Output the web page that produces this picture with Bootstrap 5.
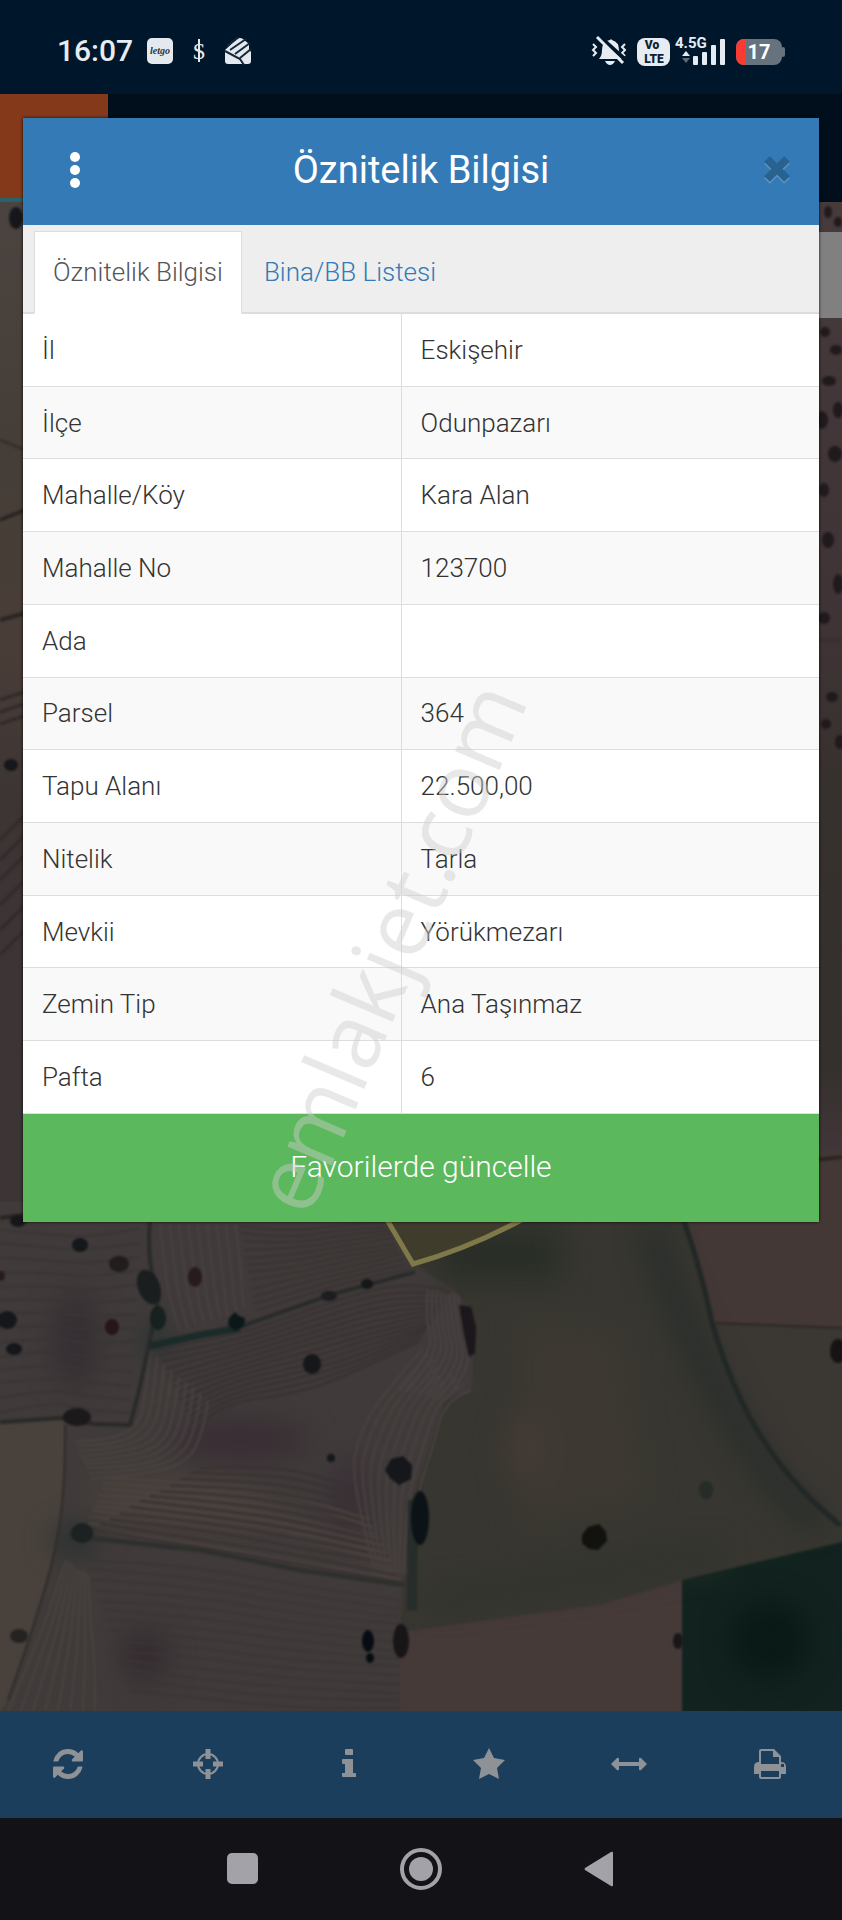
<!DOCTYPE html>
<html lang="tr">
<head>
<meta charset="utf-8">
<meta name="viewport" content="width=device-width, initial-scale=1">
<title>Öznitelik Bilgisi</title>
<link href="https://cdn.jsdelivr.net/npm/bootstrap@5.3.0/dist/css/bootstrap.min.css" rel="stylesheet">
<style>
  body { font-family: Roboto, "Noto Sans", sans-serif; font-weight: 300; background: #3f3937; }
  button { font-family: inherit; }
  .status-bar { height: 94px; padding: 8px 57px 0; background: #00172b; color: #e6ecf2; }
  .clock { font-size: 30px; line-height: 40px; font-weight: 500; margin-right: 14px; }
  .brand-strip { height: 108px; background: #000f1b; }
  .brand-tile { width: 108px; background: #84391b; border-bottom: 4px solid #28626c; }
  .map-area { min-height: 0; background: #403a38; }
  .map-area svg { position: absolute; inset: 0; }
  .side-panel { position: absolute; top: 30px; right: 0; width: 60px; height: 86px; background: #808080; }
  .tool-bar { height: 107px; background: #1b3e5c; color: #8e9296; }
  .tool-bar .btn, .system-nav .btn { color: inherit; border: 0; border-radius: 0; }
  .tool-bar .btn { flex: 1 1 0; padding: 0 4px 2px 0; }
  .system-nav { height: 102px; background: #131217; color: #a3a2a8; }
  .system-nav .btn { width: 178px; }
  .info-dialog { position: absolute; top: 24px; left: 23px; right: 23px; box-shadow: 0 0 3px rgba(0,0,0,.8); background: #fff; }
  .dialog-head { height: 107px; padding-bottom: 3px; background: #337ab7; color: #fff; }
  .dialog-title { font-size: 38px; line-height: 48px; font-weight: 400; }
  .dialog-head .btn { width: 104px; height: 56px; padding: 0; color: #fff; border: 0; }
  .dialog-head .btn-dismiss { padding-right: 28px; text-align: right; }
  .tab-strip { padding: 6px 11px 0; background: #eee; border-bottom: 2px solid #ddd; }
  .tab-strip .nav-link { height: 83px; margin: 0 3px -2px 0; padding: 20px 18px 0; border-radius: 0; font-size: 26px; line-height: 40px; color: #337ab7; }
  .tab-strip .nav-link.active { color: #555; border-color: #ddd #ddd #fff; }
  .attr-table { height: 800px; font-size: 26px; line-height: 40px; table-layout: fixed; }
  .attr-table th, .attr-table td { padding: 15px 18px 15px 19px; border-bottom: 1px solid #ddd; font-weight: 300; box-shadow: none; color: #333; vertical-align: middle; }
  .attr-table th { width: 47.5%; border-right: 1px solid #ddd; }
  .attr-table tr:nth-child(even) > * { background: #f9f9f9; }
  .btn-update { height: 108px; padding: 4px 12px 8px; background: #5cb85c; color: #fff; font-size: 30px; font-weight: 300; border: 0; border-radius: 0; }
  .btn-update:hover { background: #4cae4c; color: #fff; }
  .stamp { position: absolute; left: 0; top: 0; pointer-events: none; overflow: visible; }
  .stamp text { font-family: "Open Sans", "Noto Sans", sans-serif; font-size: 90px; font-weight: 400; fill: #cdcdcd; fill-opacity: .46; }
</style>
</head>
<body>
<div class="d-flex flex-column min-vh-100">

  <header class="status-bar d-flex align-items-center justify-content-between">
    <div class="d-flex align-items-center">
      <span class="clock">16:07</span>
      <svg width="108" height="28" viewBox="0 0 108 28" role="img" aria-label="Bildirimler">
        <rect x="0" y="1" width="26" height="26" rx="5" fill="#e3e9ee"/>
        <text x="13" y="17" text-anchor="middle" font-family="Liberation Serif, serif" font-style="italic" font-weight="700" font-size="10" fill="#27343f">letgo</text>
        <text x="52" y="22" text-anchor="middle" font-family="Liberation Serif, serif" font-size="24" fill="#e3e9ee">$</text>
        <path d="M52 2v23" stroke="#e3e9ee" stroke-width="2"/>
        <path d="M78 13 90 2q3-2 6 0l6 5v5l2 3v9q0 3-3 3H81q-3 0-3-3z" fill="#e3e9ee"/>
        <path d="M80 9 92 0M83 13 99 2M88 17 103 6M78 14 93 22l4 6M93 21l11-9" stroke="#142838" stroke-width="2" fill="none"/>
      </svg>
    </div>
    <svg width="194" height="38" viewBox="0 -4 194 38" role="img" aria-label="Titreşim, VoLTE, 4.5G, pil yüzde 17">
      <g fill="#e6ecf2">
        <path d="M8 23q3-3 3-9 0-9 8-10l1-1 1 1q7 2 7 10 0 6 4 9z"/>
        <path d="M14 25h10q-2 4-5 4t-5-4z"/>
        <path d="M2 8l3 3-3 3 3 3-3 3M34 8l-3 3 3 3-3 3 3 3" fill="none" stroke="#e6ecf2" stroke-width="2"/>
        <path d="M8 0 37 26" stroke="#00172b" stroke-width="4"/>
        <path d="M6 1 32 27" stroke="#e6ecf2" stroke-width="3"/>
        <rect x="46" y="2" width="33" height="28" rx="8"/>
        <text x="84" y="12" font-family="Roboto, sans-serif" font-size="15" font-weight="700">4.5G</text>
        <path d="M91 20l4-5 4 5z"/><path d="M91 22l4 5 4-5z" opacity=".4"/>
        <rect x="102" y="20" width="5" height="9" rx="1"/><rect x="111" y="16" width="5" height="13" rx="1"/><rect x="120" y="9" width="5" height="20" rx="1"/><rect x="129" y="3" width="5" height="26" rx="1"/>
      </g>
      <g font-family="Roboto, sans-serif" font-weight="900" fill="#0b2134" text-anchor="middle">
        <text x="61" y="13" font-size="12">Vo</text><text x="63" y="27" font-size="12">LTE</text>
      </g>
      <rect x="145" y="3" width="46" height="26" rx="8" fill="#66727d"/>
      <rect x="190" y="11" width="4" height="10" rx="2" fill="#66727d"/>
      <path d="M154 3h1v26h-1q-9 0-9-9v-8q0-9 9-9z" fill="#fa3b33"/>
      <text x="168" y="23" text-anchor="middle" font-family="Roboto, sans-serif" font-size="20" font-weight="700" fill="#fff">17</text>
    </svg>
  </header>

  <main class="position-relative flex-grow-1 d-flex flex-column">
    <div class="brand-strip d-flex"><div class="brand-tile"></div></div>

    <section class="map-area position-relative flex-grow-1 overflow-hidden" aria-label="Uydu haritası">
      <svg width="100%" height="100%" viewBox="0 202 842 1509" preserveAspectRatio="xMidYMax slice" aria-hidden="true">
        <defs>
          <filter id="soft" x="-10%" y="-10%" width="120%" height="120%" color-interpolation-filters="sRGB"><feGaussianBlur stdDeviation="1"/></filter>
          <filter id="haze" x="-50%" y="-50%" width="200%" height="200%" color-interpolation-filters="sRGB"><feGaussianBlur stdDeviation="14"/></filter>
          <linearGradient id="leftEdge" x1="0" y1="0" x2="0" y2="1">
            <stop offset="0" stop-color="#4a433f"/><stop offset=".25" stop-color="#453e38"/><stop offset=".45" stop-color="#493d37"/><stop offset=".6" stop-color="#3c3534"/><stop offset="1" stop-color="#3c3435"/>
          </linearGradient>
          <linearGradient id="rightEdge" x1="0" y1="0" x2="0" y2="1">
            <stop offset="0" stop-color="#463a3b"/><stop offset=".45" stop-color="#3e3335"/><stop offset=".6" stop-color="#37312e"/><stop offset=".9" stop-color="#34302d"/><stop offset="1" stop-color="#43363a"/>
          </linearGradient>
        </defs>
        <rect y="202" width="842" height="1509" fill="#403b3a"/>
        <rect y="202" width="60" height="1000" fill="url(#leftEdge)"/>
        <rect x="780" y="202" width="62" height="960" fill="url(#rightEdge)"/>
        <g filter="url(#soft)">
          <path d="M-5 1425 65 1418Q66 1500 55 1550T8 1700L-5 1720z" fill="#49423c"/>
          <path d="M388 1210 684 1210Q700 1265 712 1323 735 1400 768 1447 795 1488 850 1530V1545L682 1580 600 1605 400 1632 412 1500 445 1400 472 1392 474 1320 455 1290 415 1264z" fill="#373630"/>
          <path d="M684 1210Q700 1265 712 1323L850 1328V1150H780z" fill="#443836"/>
          <path d="M712 1323Q735 1400 768 1447 795 1488 850 1530V1328z" fill="#3b3733"/>
          <path d="M400 1632 600 1605 682 1580V1720H400z" fill="#463a39"/>
          <path d="M682 1580 850 1540V1720H682z" fill="#12231f"/>
        </g>
        <g filter="url(#haze)">
          <path d="M650 1230Q690 1350 740 1430T820 1520" fill="none" stroke="#262c2a" stroke-width="20"/>
          <path d="M440 1280H560V1230H440z" fill="#292e27"/>
          <path d="M520 1320 620 1330 650 1500 520 1530z" fill="#3d3932"/>
          <ellipse cx="525" cy="1450" rx="22" ry="40" fill="#433a35"/>
          <path d="M430 1600 600 1575 720 1555" fill="none" stroke="#2f332e" stroke-width="16"/>
          <ellipse cx="240" cy="1440" rx="70" ry="20" fill="#382d34"/>
          <ellipse cx="75" cy="1340" rx="22" ry="50" fill="#352e33"/>
          <ellipse cx="145" cy="1655" rx="22" ry="25" fill="#332930"/>
          <ellipse cx="350" cy="1500" rx="20" ry="45" fill="#3a3037"/>
          <ellipse cx="180" cy="1500" rx="90" ry="18" fill="#4b433e"/>
          <ellipse cx="75" cy="1540" rx="24" ry="14" fill="#26302e"/>
          <ellipse cx="155" cy="1338" rx="12" ry="16" fill="#1f302f"/>
          <ellipse cx="770" cy="1640" rx="40" ry="40" fill="#091a17"/>
        </g>
        <g id="furrows" fill="none" stroke-width="2" filter="url(#soft)"></g>
        <g fill="none" filter="url(#soft)">
          <path d="M150 1222Q146 1260 158 1300L150 1340 138 1395 130 1425 95 1424 60 1418 0 1422" stroke="#292a29" stroke-width="4"/>
          <path d="M150 1346 200 1335 245 1325 330 1295 415 1272" stroke="#282b2a" stroke-width="4"/>
          <path d="M150 1346 200 1335 240 1328" stroke="#1c2a2a" stroke-width="7"/>
          <path d="M65 1425Q66 1500 55 1550T8 1700" stroke="#2f2c2b" stroke-width="2"/>
          <path d="M70 1536 200 1550 300 1570 405 1585" stroke="#2e302e" stroke-width="5"/>
          <path d="M684 1222Q700 1265 712 1323 735 1400 768 1447 795 1488 840 1525" stroke="#212826" stroke-width="5"/>
          <path d="M712 1323 842 1328" stroke="#2c2828" stroke-width="2"/>
          <path d="M0 1218 40 1213M0 520 30 508M0 620 30 612M815 1160 842 1157" stroke="#2a2523" stroke-width="4"/>
          <path d="M0 440 30 452M810 640H842M815 950 842 946" stroke="#37302d" stroke-width="3"/>
          <path d="M0 700 30 690M0 712 30 702M0 724 30 714M0 840 30 810M0 860 30 830M0 880 30 850M0 905 30 875M0 930 30 900M0 955 30 925" stroke="#302a2a" stroke-width="3"/>
          <path d="M413 1500 412 1610" stroke="#262d2a" stroke-width="10"/>
        </g>
        <path d="M386 1218 413 1264Q470 1248 525 1218z" fill="#403c2c" stroke="#7f7848" stroke-width="5"/>
        <g fill="#15171a" filter="url(#soft)">
          <ellipse cx="18" cy="1221" rx="8" ry="6"/><ellipse cx="80" cy="1245" rx="8" ry="7"/><ellipse cx="119" cy="1264" rx="10" ry="8" fill="#211c1e"/>
          <ellipse cx="149" cy="1287" rx="11" ry="18" fill="#1a1e1f" transform="rotate(-20 149 1287)"/><ellipse cx="158" cy="1318" rx="8" ry="12" fill="#17211f"/>
          <ellipse cx="195" cy="1277" rx="7" ry="10" fill="#281b1e"/><ellipse cx="112" cy="1327" rx="7" ry="8" fill="#261519"/>
          <ellipse cx="7" cy="1320" rx="10" ry="9"/><ellipse cx="14" cy="1349" rx="8" ry="6"/><ellipse cx="1" cy="1276" rx="4" ry="5" fill="#281b1e"/>
          <path d="M235 1312l4 4 6 2-1 8-9 5-7-6 1-7z" fill="#0c1719"/><ellipse cx="329" cy="1296" rx="8" ry="5" fill="#1c1d20"/><ellipse cx="367" cy="1284" rx="6" ry="5"/>
          <ellipse cx="312" cy="1364" rx="9" ry="10"/><ellipse cx="77" cy="1417" rx="14" ry="9" fill="#1c191b"/><ellipse cx="331" cy="1458" rx="4" ry="4"/>
          <path d="M385 1470l6-11 12-3 9 9-1 14-12 6-9-7z"/><ellipse cx="420" cy="1518" rx="9" ry="27" fill="#0b1316"/>
          <ellipse cx="82" cy="1533" rx="11" ry="10" fill="#1b2221"/><ellipse cx="19" cy="1636" rx="9" ry="7" fill="#252222"/>
          <ellipse cx="368" cy="1641" rx="6" ry="11" fill="#080c12"/><ellipse cx="370" cy="1658" rx="4" ry="5" fill="#080c12"/><ellipse cx="401" cy="1641" rx="8" ry="17" fill="#181517"/>
          <path d="M459 1305l12 2 5 20-1 26-6 4-5-22z" fill="#1b171b"/>
          <path d="M582 1535l6-8 11-3 7 8 1 9-9 9-9-1-7-6z" fill="#12120f"/><ellipse cx="838" cy="1351" rx="8" ry="12" fill="#171315"/>
          <ellipse cx="678" cy="1641" rx="5" ry="8" fill="#17171a"/><ellipse cx="706" cy="1490" rx="7" ry="9" fill="#262c27"/>
          <ellipse cx="11" cy="765" rx="7" ry="6"/><ellipse cx="16" cy="218" rx="7" ry="11"/>
          <g fill="#211a1c">
            <ellipse cx="825" cy="332" rx="5" ry="5"/><ellipse cx="836" cy="350" rx="6" ry="5"/><ellipse cx="829" cy="381" rx="7" ry="5"/><ellipse cx="822" cy="420" rx="6" ry="9"/><ellipse cx="838" cy="410" rx="5" ry="8"/><ellipse cx="835" cy="454" rx="7" ry="8"/><ellipse cx="824" cy="490" rx="5" ry="7"/><ellipse cx="828" cy="540" rx="6" ry="8"/><ellipse cx="838" cy="584" rx="5" ry="10"/><ellipse cx="824" cy="618" rx="6" ry="6"/><ellipse cx="832" cy="697" rx="6" ry="5"/><ellipse cx="826" cy="724" rx="5" ry="5"/><ellipse cx="840" cy="742" rx="5" ry="7"/><ellipse cx="828" cy="212" rx="4" ry="6"/><ellipse cx="838" cy="222" rx="4" ry="5"/>
          </g>
        </g>
      </svg>
      <div class="side-panel"></div>
    </section>

    <nav class="tool-bar d-flex align-items-stretch" aria-label="Harita araçları">
      <button class="btn" type="button" aria-label="Yenile"><svg width="30" height="30" viewBox="0 0 1536 1536" fill="currentColor"><path d="M1511 928q0 5-1 7-64 268-268 434.500T764 1536q-146 0-282.500-55T238 1324l-129 129q-19 19-45 19t-45-19-19-45V960q0-26 19-45t45-19h448q26 0 45 19t19 45-19 45l-137 137q71 66 161 102t187 36q134 0 250-65t186-179q11-17 53-117 8-23 30-23h192q13 0 22.500 9.500T1511 928zm25-800v448q0 26-19 45t-45 19h-448q-26 0-45-19t-19-45 19-45l138-138Q969 256 768 256q-134 0-250 65T332 500q-11 17-53 117-8 23-30 23H50q-13 0-22.500-9.500T18 608v-7q65-268 270-434.500T768 0q146 0 284 55.500T1297 212l130-129q19-19 45-19t45 19 19 45z"/></svg></button>
      <button class="btn" type="button" aria-label="Konumum"><svg width="30" height="30" viewBox="0 0 30 30" fill="none" stroke="currentColor"><circle cx="15" cy="15" r="10" stroke-width="2"/><path d="M15 0v10M15 20v10M0 15h10M20 15h10" stroke-width="5"/></svg></button>
      <button class="btn" type="button" aria-label="Bilgi"><svg width="30" height="30" viewBox="0 0 30 30" fill="currentColor"><path d="M12 0h6q1 0 1 1v5h-7q-1 0-1-1V1q0-1 1-1zM9 10h10v14h2q1 0 1 1v3H9q-1 0-1-1v-3h3v-9H9q-1 0-1-1v-3q0-1 1-1z"/></svg></button>
      <button class="btn" type="button" aria-label="Favoriler"><svg width="32" height="32" viewBox="0 0 32 32" fill="currentColor"><path d="M16 0l5 10 11 2-8 8 2 11-10-5-10 5 2-11-8-8 11-2z"/></svg></button>
      <button class="btn" type="button" aria-label="Mesafe ölç"><svg width="36" height="30" viewBox="0 0 36 30" fill="currentColor"><path d="M0 15 6 9q2-1 2 1v3h20v-3q0-2 2-1l6 6-6 6q-2 1-2-1v-3H8v3q0 2-2 1z"/></svg></button>
      <button class="btn" type="button" aria-label="Yazdır"><svg width="32" height="30" viewBox="0 0 32 30" fill="currentColor"><path fill-rule="evenodd" d="M5 2q0-2 2-2h13l7 7v6q5 0 5 5v7h-5v3q0 2-2 2H7q-2 0-2-2v-3H0v-7q0-5 5-5zm2 0v13h18V8h-6V2zm0 20v6h18v-6zm20-7v3h3v-3z"/></svg></button>
    </nav>

    <section class="info-dialog" role="dialog" aria-labelledby="dialogTitle">
      <div class="dialog-head d-flex align-items-center justify-content-between">
        <button class="btn" type="button" aria-label="Menü"><svg width="12" height="38" viewBox="0 0 12 38" fill="currentColor"><circle cx="6" cy="6" r="5"/><circle cx="6" cy="19" r="5"/><circle cx="6" cy="32" r="5"/></svg></button>
        <h1 class="dialog-title m-0" id="dialogTitle">Öznitelik Bilgisi</h1>
        <button class="btn btn-dismiss" type="button" aria-label="Kapat"><svg width="28" height="30" viewBox="0 0 28 30" fill="none" stroke-width="8"><path d="M4 6 24 26M24 6 4 26" stroke="#5c95c5"/><path d="M4 4 24 24M24 4 4 24" stroke="#29628f"/></svg></button>
      </div>
      <nav class="nav nav-tabs tab-strip">
        <a class="nav-link active" href="#oznitelik" aria-current="page">Öznitelik Bilgisi</a>
        <a class="nav-link" href="#bina">Bina/BB Listesi</a>
      </nav>
      <table class="table attr-table m-0" id="oznitelik">
        <tbody>
          <tr><th scope="row">İl</th><td>Eskişehir</td></tr>
          <tr><th scope="row">İlçe</th><td>Odunpazarı</td></tr>
          <tr><th scope="row">Mahalle/Köy</th><td>Kara Alan</td></tr>
          <tr><th scope="row">Mahalle No</th><td>123700</td></tr>
          <tr><th scope="row">Ada</th><td></td></tr>
          <tr><th scope="row">Parsel</th><td>364</td></tr>
          <tr><th scope="row">Tapu Alanı</th><td>22.500,00</td></tr>
          <tr><th scope="row">Nitelik</th><td>Tarla</td></tr>
          <tr><th scope="row">Mevkii</th><td>Yörükmezarı</td></tr>
          <tr><th scope="row">Zemin Tip</th><td>Ana Taşınmaz</td></tr>
          <tr><th scope="row">Pafta</th><td>6</td></tr>
        </tbody>
      </table>
      <button class="btn btn-update w-100" type="button">Favorilerde güncelle</button>
      <svg class="stamp" width="100%" height="100%" viewBox="0 0 796 1104" aria-hidden="true"><text transform="translate(286 1101) rotate(-67)">emlakjet.com</text></svg>
    </section>
  </main>

  <nav class="system-nav d-flex justify-content-center align-items-center" aria-label="Sistem gezinmesi">
    <button class="btn p-0" type="button" aria-label="Son uygulamalar"><svg width="32" height="32" viewBox="0 0 32 32" fill="currentColor"><rect width="31" height="31" rx="5"/></svg></button>
    <button class="btn p-0" type="button" aria-label="Ana ekran"><svg width="44" height="44" viewBox="0 0 44 44" fill="currentColor"><circle cx="22" cy="22" r="12"/><circle cx="22" cy="22" r="19" fill="none" stroke="currentColor" stroke-width="4"/></svg></button>
    <button class="btn p-0" type="button" aria-label="Geri"><svg width="32" height="36" viewBox="0 0 32 36" fill="currentColor"><path d="M2 17 28 1q2-1 2 1v32q0 2-2 1L2 19q-1-1 0-2z"/></svg></button>
  </nav>
</div>

<script src="https://cdn.jsdelivr.net/npm/bootstrap@5.3.0/dist/js/bootstrap.bundle.min.js"></script>
<script>
  // Plough lines: each field blends from its first guide line to its last one.
  const fields = [
    { n: 9, c: '#484140', a: [[160,1222],[165,1270],[172,1310],[180,1330]], b: [[235,1222],[240,1260],[242,1290],[244,1310]] },
    { n: 12, c: '#393332', a: [[240,1226],[290,1232],[340,1225],[385,1222]], b: [[255,1312],[300,1296],[350,1282],[408,1268]] },
    { n: 14, c: '#373131', a: [[155,1350],[240,1335],[330,1302],[410,1280],[450,1292]], b: [[195,1430],[215,1405],[300,1392],[350,1375],[420,1340]] },
    { n: 9, c: '#494241', a: [[150,1352],[146,1390],[140,1425],[110,1440],[75,1442]], b: [[208,1400],[205,1425],[190,1460],[150,1475],[90,1478]] },
    { n: 10, c: '#4c433e', a: [[105,1478],[190,1482],[300,1495],[370,1520]], b: [[85,1528],[190,1543],[300,1562],[400,1580]] },
    { n: 12, c: '#393132', a: [[200,1468],[250,1466],[310,1472],[360,1490]], b: [[90,1530],[190,1545],[300,1564],[400,1582]] },
    { n: 9, c: '#494140', a: [[422,1350],[390,1385],[360,1430],[350,1480],[375,1570]], b: [[470,1390],[445,1400],[432,1450],[415,1500],[408,1575]] },
    { n: 8, c: '#4a4244', a: [[428,1290],[425,1320],[435,1350],[400,1390]], b: [[458,1295],[463,1330],[472,1370],[445,1400]] },
    { n: 8, c: '#49423f', a: [[66,1560],[50,1610],[30,1660],[8,1711]], b: [[88,1575],[90,1620],[95,1660],[95,1711]] },
    { n: 14, c: '#3b3636', a: [[85,1560],[190,1565],[290,1585],[400,1600]], b: [[130,1690],[210,1700],[300,1708],[400,1709]] },
    { n: 14, c: '#3a3535', a: [[0,1230],[50,1234],[90,1238],[140,1228]], b: [[0,1412],[50,1402],[90,1410],[130,1414]] }
  ];
  const layer = document.getElementById('furrows');
  fields.forEach(f => {
    for (let i = 0; i < f.n; i++) {
      const t = i / (f.n - 1);
      const p = f.a.map((q, k) => [q[0] + (f.b[k][0] - q[0]) * t, q[1] + (f.b[k][1] - q[1]) * t + Math.sin(i * 5 + k * 3)]);
      let d = 'M' + p[0];
      for (let k = 1; k < p.length - 1; k++) {
        const e = k === p.length - 2 ? p[k + 1] : [(p[k][0] + p[k + 1][0]) / 2, (p[k][1] + p[k + 1][1]) / 2];
        d += 'Q' + p[k] + ' ' + e;
      }
      const path = document.createElementNS('http://www.w3.org/2000/svg', 'path');
      path.setAttribute('d', d);
      path.setAttribute('stroke', f.c);
      layer.appendChild(path);
    }
  });
</script>
</body>
</html>
